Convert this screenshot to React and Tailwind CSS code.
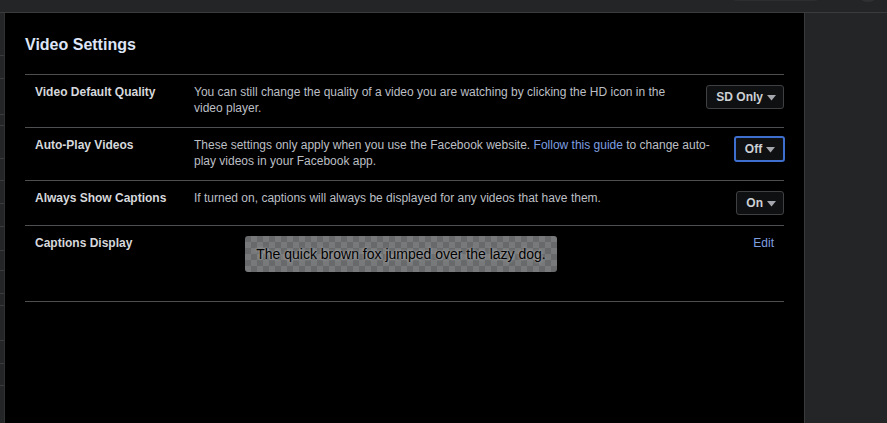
import React from 'react'

const ROWS = [
  {
    label: 'Video Default Quality',
    desc: <>You can still change the quality of a video you are watching by clicking the HD icon in the video player.</>,
    value: 'SD Only',
  },
  {
    label: 'Auto-Play Videos',
    desc: (
      <>
        These settings only apply when you use the Facebook website.{' '}
        <a className="text-[#7f9fe0]">Follow this guide</a> to change auto-play videos in your Facebook app.
      </>
    ),
    value: 'Off',
    focused: true,
  },
  {
    label: 'Always Show Captions',
    desc: <>If turned on, captions will always be displayed for any videos that have them.</>,
    value: 'On',
  },
]

const SIDE_MARKS = [42, 65, 101, 112, 145, 167, 190, 213, 237, 257, 280, 292, 327, 350, 372]

function Caret() {
  return (
    <svg width="9" height="6" viewBox="0 0 9 6" className="ml-[4px] mt-[2px] shrink-0">
      <path d="M0 0h9L4.5 5.5z" fill="#a4a8ae" />
    </svg>
  )
}

function Dropdown({ value, focused }) {
  return (
    <button
      className={`flex items-center whitespace-nowrap rounded-[3px] bg-[#0f1012] text-[12px] font-bold text-[#cdd0d5] ${
        focused
          ? 'border-2 border-[#3e6fce] w-[51px] justify-center pl-[1px] mr-[-1px] mt-[-2px] h-[26px]'
          : 'h-[24px] border border-[#3e4042] pl-[9px] pr-[7px]'
      }`}
    >
      {value}
      <Caret />
    </button>
  )
}

function SettingRow({ label, desc, value, focused }) {
  return (
    <div className="flex border-t border-[#4e4f51] pl-[10px] pt-[9px] pb-[11px]">
      <div className="w-[159px] shrink-0 text-[12px] leading-[16px] font-bold text-[#d6d8dc]">{label}</div>
      <div className="flex-1 mr-[12px] text-[12px] leading-[16px] text-[#bcbfc4]">{desc}</div>
      <div className="shrink-0 flex justify-end pt-[1px] h-[24px]">
        <Dropdown value={value} focused={focused} />
      </div>
    </div>
  )
}

export default function App() {
  return (
    <div className="w-[887px] h-[423px] overflow-hidden flex flex-col bg-[#242526] font-['Liberation_Sans',Arial,sans-serif]">
      {/* top bar */}
      <div className="relative h-[13px] shrink-0 bg-[#242526] border-b border-[#3a3b3c]">
        <div className="absolute left-[727px] top-[-20px] w-[97px] h-[21px] rounded-full bg-[#2d2e30]" />
        <div className="absolute left-[855px] top-[-24px] w-[26px] h-[26px] rounded-full bg-[#303133]" />
      </div>

      <div className="flex flex-1 min-h-0">
        {/* left sidebar sliver */}
        <div className="relative w-[5px] shrink-0 bg-[#242526] border-r border-[#303133]">
          {SIDE_MARKS.map(y => (
            <div key={y} className="absolute left-0 w-[4px] h-px bg-[#3a3b3c]" style={{ top: y }} />
          ))}
        </div>

        {/* settings panel */}
        <div className="w-[799px] shrink-0 bg-black px-[20px] pt-[22px]">
          <h2 className="text-[16px] leading-[20px] font-bold text-[#dde5f7] mb-[19px]">Video Settings</h2>

          {ROWS.map(r => (
            <SettingRow key={r.label} {...r} />
          ))}

          <div className="flex border-t border-b border-[#4e4f51] pl-[10px] pt-[9px] h-[77px]">
            <div className="w-[159px] shrink-0 text-[12px] leading-[16px] font-bold text-[#d6d8dc]">Captions Display</div>
            <div className="flex-1">
              <div className="ml-[51px] mt-[1px] w-[312px] h-[36px] rounded-[3px] flex items-center justify-center bg-[repeating-conic-gradient(#78797b_0_25%,#68696b_0_50%)] bg-[length:12px_12px] text-[14px] text-black [text-shadow:0_0_3px_#c8c8c8]">
                The quick brown fox jumped over the lazy dog.
              </div>
            </div>
            <a className="text-[12px] leading-[16px] text-[#7f9fe0] pr-[10px]">Edit</a>
          </div>
        </div>

        {/* right gutter */}
        <div className="flex-1 bg-[#242526] border-l border-[#3a3b3c]" />
      </div>
    </div>
  )
}
